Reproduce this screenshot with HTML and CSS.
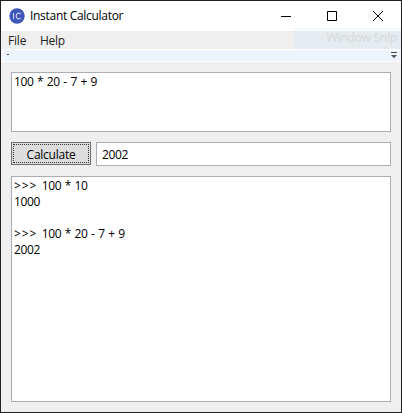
FILE: index.html
```html
<!DOCTYPE html>
<html lang="en">
<head>
<meta charset="utf-8">
<title>Instant Calculator</title>
<link rel="stylesheet" href="styles.css">
</head>
<body>
<main class="window">
  <header class="titlebar">
    <svg class="logo" width="16" height="16" viewBox="0 0 16 16"><circle cx="8" cy="8" r="7.7" fill="#3f55b7"/><path d="M4.5 5v6M11.8 5.8c-2-1.5-4.6-.4-4.6 2.2s2.6 3.7 4.6 2.2" fill="none" stroke="#c4cbee" stroke-width="1.2"/></svg>
    <h1 class="title">Instant Calculator</h1>
    <div class="controls">
      <svg width="10" height="10" viewBox="0 0 10 10"><path d="M0 5.5h10"/></svg>
      <svg width="10" height="10" viewBox="0 0 10 10"><path d="M.5.5h9v9h-9z"/></svg>
      <svg width="10" height="10" viewBox="0 0 10 10"><path d="M0 0l10 10M10 0L0 10"/></svg>
    </div>
  </header>
  <nav class="menu"><span class="file">File</span><span class="help">Help</span></nav>
  <div class="snip">Window Snip</div>
  <div class="toolbar"><span class="grip"></span>
    <svg class="more" width="6" height="7" viewBox="0 0 6 7"><path d="M0 .5h6" stroke="#444"/><path d="M0 3h6L3 6.2z" fill="#555"/></svg>
  </div>
  <section class="content">
    <div class="box expression">100 * 20 - 7 + 9</div>
    <div class="row">
      <button class="calculate"><span>Calculate</span></button>
      <div class="box result">2002</div>
    </div>
    <div class="box history"><div><span class="prompt">&gt;&gt;&gt;</span> 100 * 10</div><div>1000</div><div>&nbsp;</div><div><span class="prompt">&gt;&gt;&gt;</span> 100 * 20 - 7 + 9</div><div>2002</div></div>
  </section>
</main>
</body>
</html>
```
FILE: styles.css
```css
* { box-sizing: border-box; }
body {
  margin: 0;
  font: 12px/16px "Open Sans", "Noto Sans", sans-serif;
  color: #000;
}
.window {
  position: relative;
  display: flex;
  flex-direction: column;
  width: 402px;
  height: 413px;
  border: 1px solid #211f21;
  background: #efefef;
}
.titlebar {
  display: flex;
  align-items: center;
  height: 30px;
  padding: 0 18px 0 8px;
  background: #fff;
}
.logo { margin-right: 5px; }
.title {
  margin: 0;
  font-size: 12px;
  font-weight: 400;
  letter-spacing: -0.3px;
}
.controls {
  display: flex;
  gap: 36px;
  margin-left: auto;
}
.controls svg { fill: none; stroke: #000; }
.menu {
  display: flex;
  height: 18px;
  padding: 2px 7px 0;
  color: #222;
}
.file { width: 32px; letter-spacing: -0.2px; }
.help { letter-spacing: -0.3px; }
.snip {
  position: absolute;
  top: 26px;
  right: 0;
  width: 107px;
  height: 22px;
  padding: 3px 4px 0 0;
  background: linear-gradient(#f6fbfe 4px, #e5ebef 4px);
  color: #d5d9da;
  letter-spacing: -0.2px;
  text-align: right;
  white-space: nowrap;
}
.toolbar {
  display: flex;
  justify-content: space-between;
  height: 13px;
  padding: 4px 4px 0 6px;
  border: solid #fff;
  border-width: 1px 0;
  background: linear-gradient(90deg, #f6f8fb 3px, #ecf4fd 3px);
}
.grip { width: 2px; height: 1px; background: #444; }
.more { margin-top: -2px; }
.content {
  display: flex;
  flex: 1;
  flex-direction: column;
  gap: 10px;
  padding: 10px;
}
.box {
  border: 1px solid #abadb3;
  background: #fff;
  padding: 1px 2px;
  letter-spacing: -0.4px;
  word-spacing: 0.9px;
}
.expression { height: 60px; }
.row {
  display: flex;
  gap: 5px;
  height: 24px;
}
.calculate {
  width: 80px;
  height: 23px;
  padding: 1px;
  border: 1px solid #707070;
  background: #ddd;
  color: #000;
  font: inherit;
  letter-spacing: -0.25px;
}
.calculate span {
  display: block;
  height: 19px;
  border: 1px dotted #333;
  line-height: 19px;
}
.result { flex: 1; padding: 4px 5px; }
.history { flex: 1; }
.prompt { margin-right: 0.8px; letter-spacing: 0.9px; }
```
